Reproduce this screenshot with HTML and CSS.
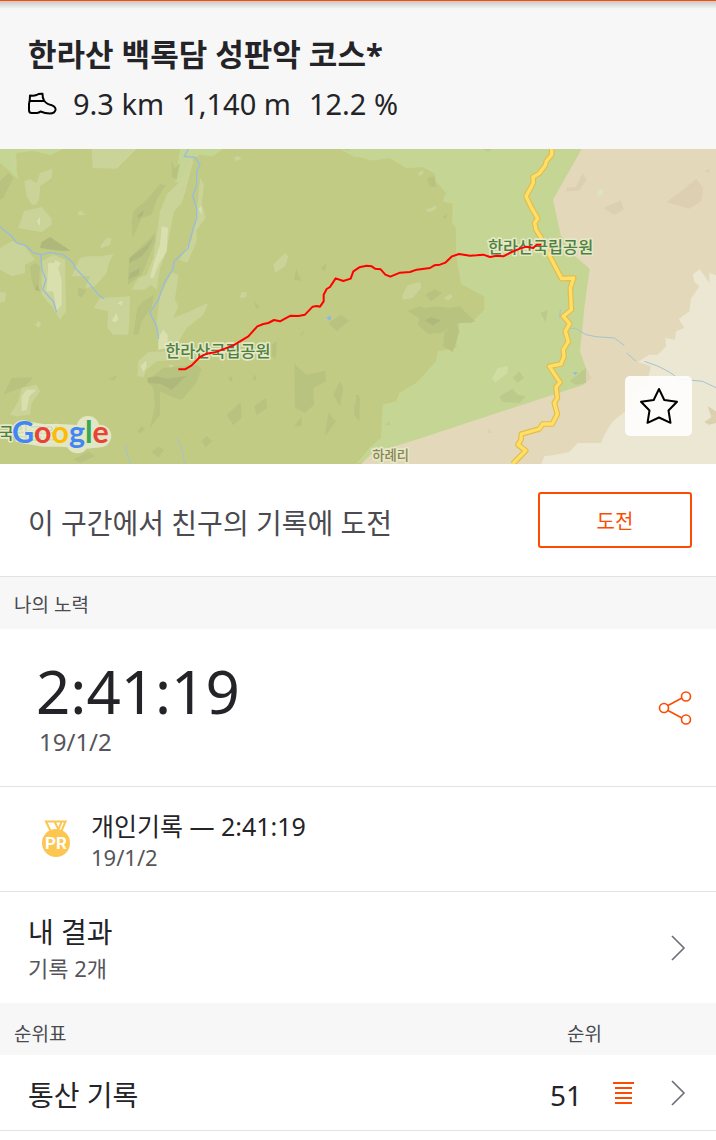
FILE: index.html
```
<!DOCTYPE html>
<html lang="ko">
<head>
    <meta charset="UTF-8">
    <meta name="viewport" content="width=device-width, initial-scale=1.0">
    <title>한라산 백록담 성판악 코스</title>
    <link rel="stylesheet" href="styles.css">
</head>
<body>
    <header>
        <h1>한라산 백록담 성판악 코스*</h1>
        <div class="stats">
            <svg class="shoe" viewBox="0 0 30 24" aria-hidden="true">
                <path d="M2 3.500 Q6 4 8.500 3 Q11 1.500 14.500 1.800 Q14.500 6 16 8.500 Q19 12.500 24 13.300 Q28 15 27.500 18 Q26.500 21.500 22 21.500 Q17 21.500 12.500 19.500 Q11 20.800 9 21 H3.500 Q1 21 1 18 V12 Q2 8 2 3.500 Z M1.800 9 H16"/>
            </svg>
            <span>9.3 km</span>
            <span>1,140 m</span>
            <span>12.2 %</span>
        </div>
    </header>

    <div class="map">
        <svg class="map-tiles" viewBox="0 3 2148 945">
            <rect class="forest" y="3" width="2148" height="945"/>
            <path class="meadow" d="M0 3 H190 L150 22 100 8 50 15 45 35 55 95 30 70 0 45Z M540 3 H668 L640 25 600 20 570 40 545 100 525 105Z M1020 3 L1080 14 1068 30Z"/>
            <g transform="translate(1068 0)">
                <path class="meadow" d="M-20 3 H680 L720 150 730 360 700 720 0 948 L15 930 45 895 75 870 80 770 120 760 130 735 180 705 200 685 240 640 245 610 300 600 310 525 345 525 385 485 385 445 355 430 315 408 300 320 300 240 288 225 290 168 260 160 270 135 240 100 235 75 200 58 150 60 100 30 50 38 0 25Z"/>
                <path class="land" d="M677 3 H1080 V948 H15 L50 915 180 875 683 710 693 670 672 610 685 480 701 362 640 310 614 260 591 155Z"/>
                <path class="sand" d="M1080 382 L1060 375 1060 405 1032 364 1011 378 1014 400 1030 415 1005 452 1000 490 968 513 985 540 960 550 957 575 928 570 930 595 905 620 880 620 845 642 885 655 870 710 830 740 828 775 770 820 745 860 735 885 665 885 640 912 600 920 565 925 556 948 H1080Z"/>
                <path class="land-dark" d="M680 75 L692 95 670 128 630 130 632 119 660 117Z M743 180 L795 157 803 185 775 201Z M932 163 L985 122 1020 92 1042 120 1035 160 1000 182 965 172Z M1045 822 L1066 808 1055 775 1080 790 V825 L1058 830Z M690 660 L706 690 685 708Z M397 842 L407 855 393 855Z M1045 70 L1060 63 1060 75Z"/>
                <path class="forest-dark" d="M155 490 L190 475 205 480 240 475 280 480 310 475 358 522 310 525 255 555 215 558 185 530 190 510Z M208 440 L235 423 258 435 225 460Z M265 555 L300 525 310 550 290 612 262 595Z M214 90 L235 85 240 118 220 115Z M258 210 L274 195 270 210Z M0 740 L10 742 8 785 0 795Z"/>
                <path class="meadow-dark" d="M430 745 L470 722 485 740 510 745 490 765 440 762Z M470 690 L490 670 504 690 485 705Z M640 700 L665 680 690 660 690 705 660 710Z M553 495 L576 485 568 522Z M90 832 L97 820 104 830Z M378 3 H410 L395 11Z"/>
                <path class="forest-darker" d="M205 517 L225 508 255 517 230 532Z"/>
                <path class="light" d="M139 440 L155 412 192 402 196 420 170 450 140 455Z M208 185 L242 173 240 184 220 193Z M264 449 L285 437 290 448 275 458Z M185 75 L203 66 200 80 190 83Z"/>
                <path class="meadow-light" d="M408 692 L425 660 455 654 455 675 418 704Z"/>
                <path class="mint" d="M723 133 L735 122 743 128 737 142 727 144Z"/>
                <path class="stream" d="M640 541 H658 L690 560 720 566 775 570 805 592 M812 615 L840 640 M865 640 L905 654 940 672 970 693 1040 700 1080 719"/>
                <path class="stream" d="M613 485 L611 510"/>
                <path class="lake" d="M650 673 H666 L658 681Z"/>
                <path class="road-edge" d="M587 3 V20 L571 40 568 52 550 76 531 87 532 105 510 145 528 182 545 211 536 225 540 245 562 280 579 320 617 392 653 390 643 420 646 485 622 505 641 527 628 550 637 581 622 605 624 625 615 648 580 655 612 703 600 718 604 750 595 765 604 798 589 828 560 828 550 843 496 858 495 875 486 890 509 908 470 948"/>
                <path class="road" d="M587 3 V20 L571 40 568 52 550 76 531 87 532 105 510 145 528 182 545 211 536 225 540 245 562 280 579 320 617 392 653 390 643 420 646 485 622 505 641 527 628 550 637 581 622 605 624 625 615 648 580 655 612 703 600 718 604 750 595 765 604 798 589 828 560 828 550 843 496 858 495 875 486 890 509 908 470 948"/>
            </g>
            <path class="light" d="M275 3 H410 L350 62 278 60Z M73 100 L90 93 110 105 120 75 157 62 155 90 120 115 118 150 108 170 95 170 80 145Z M55 240 L72 190 125 177 155 212 155 230 125 253Z M702 28 L715 23 725 33 708 40Z M232 202 L240 186 256 200Z M540 100 L570 30 580 40 555 135 545 165 522 190 510 250 500 310 480 360 470 425 452 410 435 425 395 425 415 390 440 380 460 330 480 190 500 140Z M600 90 L612 110 605 165 617 210 590 245 590 280 562 345 538 335 575 275 585 220 595 150Z M0 300 L35 280 70 290 105 335 75 350 75 375 35 385 0 365Z M300 295 L320 270 335 270 330 290 305 300Z M215 385 L240 330 265 325 300 325 340 318 325 350 320 375 285 415 255 420 270 385 240 385Z M125 340 L160 320 195 335 198 490 180 515 160 480 125 440Z M515 373 L535 380 525 455 535 475 520 510 570 490 590 480 625 465 610 500 560 540 530 590 475 605 470 520 480 445Z M280 480 L300 450 390 445 388 520 385 560 340 560 322 540 325 490Z M0 432 L18 434 15 460 0 465Z M105 530 L115 518 125 528 115 540Z M820 350 L855 315 865 325 855 355 825 375Z M725 433 L740 432 738 448 718 450Z M412 685 L415 640 445 612 500 610 540 635 470 640 440 665 430 687Z M30 800 L55 760 65 720 110 710 120 730 95 765 90 800 50 805Z M507 650 L520 650 522 670 508 670Z M30 20 L50 30 50 60 40 55Z"/>
            <path class="lighter" d="M485 235 L504 240 500 310 475 350 460 390 450 390 460 350 480 290Z M145 345 L170 345 185 395 185 470 170 490 160 430 140 430Z M165 335 L183 345 175 360 163 350Z M477 565 L490 545 503 560 503 600 475 605Z M422 655 L438 638 440 655 430 672Z M65 790 L65 745 80 725 110 725 88 745 80 785Z M110 220 L120 207 120 235Z M335 518 L350 495 355 515 345 523Z M352 465 L368 458 365 473Z M595 182 L605 175 606 200Z"/>
            <path class="forest-dark" d="M395 220 L400 190 445 150 480 107 497 112 470 155 455 200 425 210 398 270Z M388 330 L425 295 465 255 465 280 440 345 425 380 383 410 385 370Z M412 480 L430 460 462 440 455 480 425 520 415 560 400 560Z M525 60 L540 45 530 95 515 85 515 40Z M90 355 L105 345 120 355 115 430 105 425 95 400Z M440 700 L490 660 590 650 605 665 585 710 545 755 510 745 480 730 480 800 450 840 465 770 460 720Z M10 740 L35 690 100 688 75 715Z M883 648 L920 680 975 668 978 700 940 720 942 770 915 795 885 780Z M762 775 L798 750 802 780 770 802Z M680 800 L722 762 725 810 700 832Z M975 865 L985 795 1008 820Z M985 525 L1022 500 1048 518 1010 550Z M882 395 L888 362 904 398Z M815 590 L830 580 828 632 815 625Z M605 880 L620 863 637 880 617 897Z M455 912 L475 896 492 905 475 930Z M220 935 L265 910 285 925 240 945Z M0 100 L25 75 40 90 10 150 0 155Z M325 695 L350 680 345 697Z M412 850 L425 833 435 845 420 855Z M235 420 L260 425 245 450 233 440Z M1000 740 L1020 700 1030 720 1020 775Z M1065 765 L1080 750 1078 820 1062 800Z M962 360 L980 346 975 370Z M762 462 L778 475 770 485Z M683 690 L698 685 695 703Z M757 697 L765 678 770 695Z M900 562 L913 545 907 562Z M882 835 L905 805 905 835Z"/>
            <path class="forest-darker" d="M412 205 L430 185 430 200 415 212Z M120 300 L125 282 150 267 212 308 175 308Z M388 330 L435 295 460 270 445 300 425 325 388 345Z M385 395 L390 375 420 360 415 380Z M442 690 L470 685 500 692 560 683 515 725 480 707 445 705Z M105 425 L112 408 120 430Z"/>
            <path class="river" d="M0 236 L35 265 50 285 78 293 100 315 125 320 150 313 190 320 220 345 225 360 250 385 300 445 312 452 M122 320 L126 365 138 395 128 425 160 460 170 493 M565 3 L553 25 585 28 600 50 590 70 590 110 578 145 590 180 590 210 570 275 565 300 522 340 518 365 495 400 475 455 450 495 470 535 476 572"/>
            <path class="stream" d="M380 890 L377 910 392 948 M530 870 L545 900 554 948"/>
            <path class="lake" d="M979 511 L987 503 995 508 990 518Z"/>
            <g class="park-label">
                <text x="496" y="626">한라산국립공원</text>
                <text x="1464" y="314">한라산국립공원</text>
                <text x="-4" y="872">국립공원</text>
            </g>
            <text class="town-label" x="1117" y="937">하례리</text>
            <path class="route" d="M535 664 L555 664 575 652 600 627 620 617 645 613 700 592 745 565 772 535 790 528 805 525 822 516 840 520 855 512 872 503 895 504 915 500 938 476 950 474 960 476 971 460 971 440 980 423 990 417 1007 391 1030 399 1052 392 1060 370 1078 358 1100 353 1115 355 1125 362 1142 364 1156 380 1171 386 1200 374 1230 372 1250 365 1290 360 1303 352 1320 350 1336 344 1356 325 1377 318 1410 323 1430 322 1450 320 1470 327 1490 323 1510 325 1535 312 1560 302 1580 296 1600 300 1610 290 1624 290"/>
            <path class="google-halo" d="M70 850 L75 853 130 862 180 862 230 865 232 882 M264 838 V868 L300 864"/>
            <text class="google" x="36" y="886"><tspan class="blue">G</tspan><tspan class="red">o</tspan><tspan class="yellow">o</tspan><tspan class="blue">g</tspan><tspan class="green">l</tspan><tspan class="red">e</tspan></text>
        </svg>
        <button class="favorite" aria-label="즐겨찾기">
            <svg viewBox="0 0 40 38" aria-hidden="true">
                <path d="M20 2 L25.300 13 L38 14.800 L29.500 23.500 L31.500 35.800 L20 30.500 L8.500 35.800 L10.500 23.500 L2 14.800 L14.700 13 Z"/>
            </svg>
        </button>
    </div>

    <div class="row challenge">
        <p>이 구간에서 친구의 기록에 도전</p>
        <button class="challenge-btn">도전</button>
    </div>

    <h2>나의 노력</h2>
    <div class="row effort">
        <div>
            <p class="time">2:41:19</p>
            <p class="date">19/1/2</p>
        </div>
        <button class="share" aria-label="공유">
            <svg viewBox="0 0 34 36" aria-hidden="true">
                <path d="M10 15.500 L24 8 M10 20.500 L24 28"/>
                <circle cx="6" cy="18" r="4.500"/>
                <circle cx="28" cy="6.500" r="4.500"/>
                <circle cx="28" cy="29.500" r="4.500"/>
            </svg>
        </button>
    </div>
    <div class="row record">
        <svg class="medal" viewBox="0 0 30 38" aria-hidden="true">
            <path d="M5 1.500 H24.500 L20.500 11 H9.500 Z M13.500 1.500 L17.500 9.500 L20.500 2"/>
            <circle cx="15" cy="23" r="14"/>
            <text x="15" y="29">PR</text>
        </svg>
        <div>
            <p class="record-title">개인기록 — 2:41:19</p>
            <p class="sub">19/1/2</p>
        </div>
    </div>
    <a class="row results" href="#results">
        <div>
            <p class="label">내 결과</p>
            <p class="sub">기록 2개</p>
        </div>
        <svg class="chevron" viewBox="0 0 16 26" aria-hidden="true"><path d="M2 1 L14 13 L2 25"/></svg>
    </a>

    <h2 class="board-head"><span>순위표</span><span>순위</span></h2>
    <a class="row board" href="#leaderboard">
        <p class="label">통산 기록</p>
        <span class="label">51</span>
        <svg class="list" viewBox="0 0 21 22" aria-hidden="true"><path d="M0 1 H21 M2 6 H19 M2 11 H19 M2 16 H19 M2 21 H19"/></svg>
        <svg class="chevron" viewBox="0 0 16 26" aria-hidden="true"><path d="M2 1 L14 13 L2 25"/></svg>
    </a>
</body>
</html>
```
FILE: styles.css
```
body {
    font-family: "Noto Sans", "Noto Sans CJK KR", sans-serif;
    margin: 0;
    color: #242428;
    background: #fff;
}
h1, h2, p {
    margin: 0;
}
button {
    font-family: inherit;
    cursor: pointer;
    padding: 0;
}
a {
    color: inherit;
    text-decoration: none;
}
header {
    background: linear-gradient(#c8c8c8, #f7f7f7 8px);
    border-top: 1px solid #fc4c02;
    padding: 29px 28px 21px;
}
h1 {
    font-size: 31px;
    line-height: 48px;
}
.stats {
    display: flex;
    align-items: center;
    gap: 18px;
    padding-top: 2px;
    font-size: 29px;
    line-height: 48px;
}
.shoe {
    width: 30px;
    height: 24px;
    margin-right: -3px;
    fill: none;
    stroke: #000;
    stroke-width: 2;
    stroke-linejoin: round;
}

/* map */
.map {
    position: relative;
}
.map-tiles {
    display: block;
    width: 100%;
    height: auto;
}
.forest { fill: #c1cb84; }
.forest-dark { fill: #b9c380; }
.forest-darker { fill: #afb87b; }
.meadow { fill: #c5d593; }
.meadow-dark { fill: #bccb8c; }
.meadow-light { fill: #cfdca2; }
.light { fill: #cad498; }
.lighter { fill: #dae0ad; }
.land { fill: #e3d8ba; }
.land-dark { fill: #dcd0b0; }
.sand { fill: #ece7d3; }
.mint { fill: #dce3c0; }
.lake { fill: #8fb8e8; }
.river, .stream {
    fill: none;
    stroke: #98bcdc;
    stroke-width: 4;
}
.stream {
    stroke: #a5c3cf;
    stroke-width: 3;
}
.road, .road-edge, .route {
    fill: none;
    stroke-linejoin: round;
}
.road-edge {
    stroke: #e3bd4c;
    stroke-width: 17;
}
.road {
    stroke: #ffdf66;
    stroke-width: 10;
}
.route {
    stroke: #f00;
    stroke-width: 6;
}
.park-label, .town-label {
    font-size: 49px;
    font-weight: 500;
    fill: #4f803f;
    stroke: #e4e8c6;
    stroke-width: 10;
    stroke-linejoin: round;
    paint-order: stroke;
}
.town-label {
    font-size: 40px;
    fill: #8b8553;
}
.google {
    font-family: Lato, sans-serif;
    font-size: 91px;
    font-weight: 700;
}
.google-halo {
    fill: none;
    stroke: #e6ebcf;
    stroke-width: 68;
    stroke-linecap: round;
    stroke-linejoin: round;
    opacity: 0.85;
}
.blue { fill: #4285f4; }
.red { fill: #ea4335; }
.yellow { fill: #fbbc05; }
.green { fill: #34a853; }
.favorite {
    position: absolute;
    right: 24px;
    bottom: 28px;
    width: 67px;
    height: 60px;
    border: none;
    border-radius: 5px;
    background: rgba(255, 255, 255, 0.88);
}
.favorite svg {
    width: 40px;
    height: 38px;
    display: block;
    margin: auto;
    fill: none;
    stroke: #000;
    stroke-width: 2;
    stroke-linejoin: round;
}

/* rows */
.row {
    display: flex;
    align-items: center;
    justify-content: space-between;
    box-sizing: border-box;
    padding: 0 24px 0 28px;
    border-bottom: 1px solid #e3e3e3;
}
.challenge {
    min-height: 113px;
    font-size: 28px;
    color: #4a4a50;
}
.challenge p {
    padding-top: 4px;
}
.challenge-btn {
    width: 154px;
    height: 56px;
    border: 2px solid #fc4c02;
    border-radius: 3px;
    background: #fff;
    color: #fc4c02;
    font-size: 20px;
}
h2 {
    background: #f7f7f7;
    padding: 5px 14px 0;
    font-size: 19px;
    font-weight: 400;
    line-height: 47px;
    color: #4a4a50;
}
.effort {
    min-height: 158px;
    padding-left: 36px;
}
.time {
    font-size: 60px;
    line-height: 68px;
}
.date {
    padding-left: 3px;
    font-size: 24px;
    line-height: 34px;
    color: #55555b;
}
.share {
    border: none;
    background: none;
}
.share svg {
    display: block;
    width: 34px;
    height: 36px;
    fill: none;
    stroke: #fc4c02;
    stroke-width: 1.6;
}
.record {
    min-height: 105px;
    justify-content: flex-start;
    gap: 20px;
    padding-left: 41px;
}
.medal {
    width: 30px;
    height: 38px;
    fill: #fcc650;
}
.medal path {
    fill: none;
    stroke: #fcc650;
    stroke-width: 2;
}
.medal text {
    font-family: Roboto, sans-serif;
    font-size: 17px;
    font-weight: 700;
    text-anchor: middle;
    fill: #fff;
}
.record-title {
    padding-top: 4px;
    font-size: 25px;
    line-height: 32px;
}
.sub {
    font-size: 22px;
    line-height: 32px;
    color: #55555b;
}
.record .sub {
    line-height: 30px;
}
.results {
    min-height: 111px;
    border-bottom: none;
}
.label {
    font-size: 28px;
    line-height: 40px;
}
.chevron {
    width: 16px;
    height: 26px;
    margin-right: 6px;
    fill: none;
    stroke: #6d6d78;
    stroke-width: 1.6;
}
.board-head {
    display: flex;
    justify-content: space-between;
    padding: 10px 114px 0 14px;
    line-height: 42px;
}
.board {
    min-height: 76px;
}
.board .label {
    padding-top: 4px;
}
.board p {
    flex: 1;
}
.list {
    width: 21px;
    height: 22px;
    margin: 0 36px 0 31px;
    stroke: #fc4c02;
    stroke-width: 2;
}
```
